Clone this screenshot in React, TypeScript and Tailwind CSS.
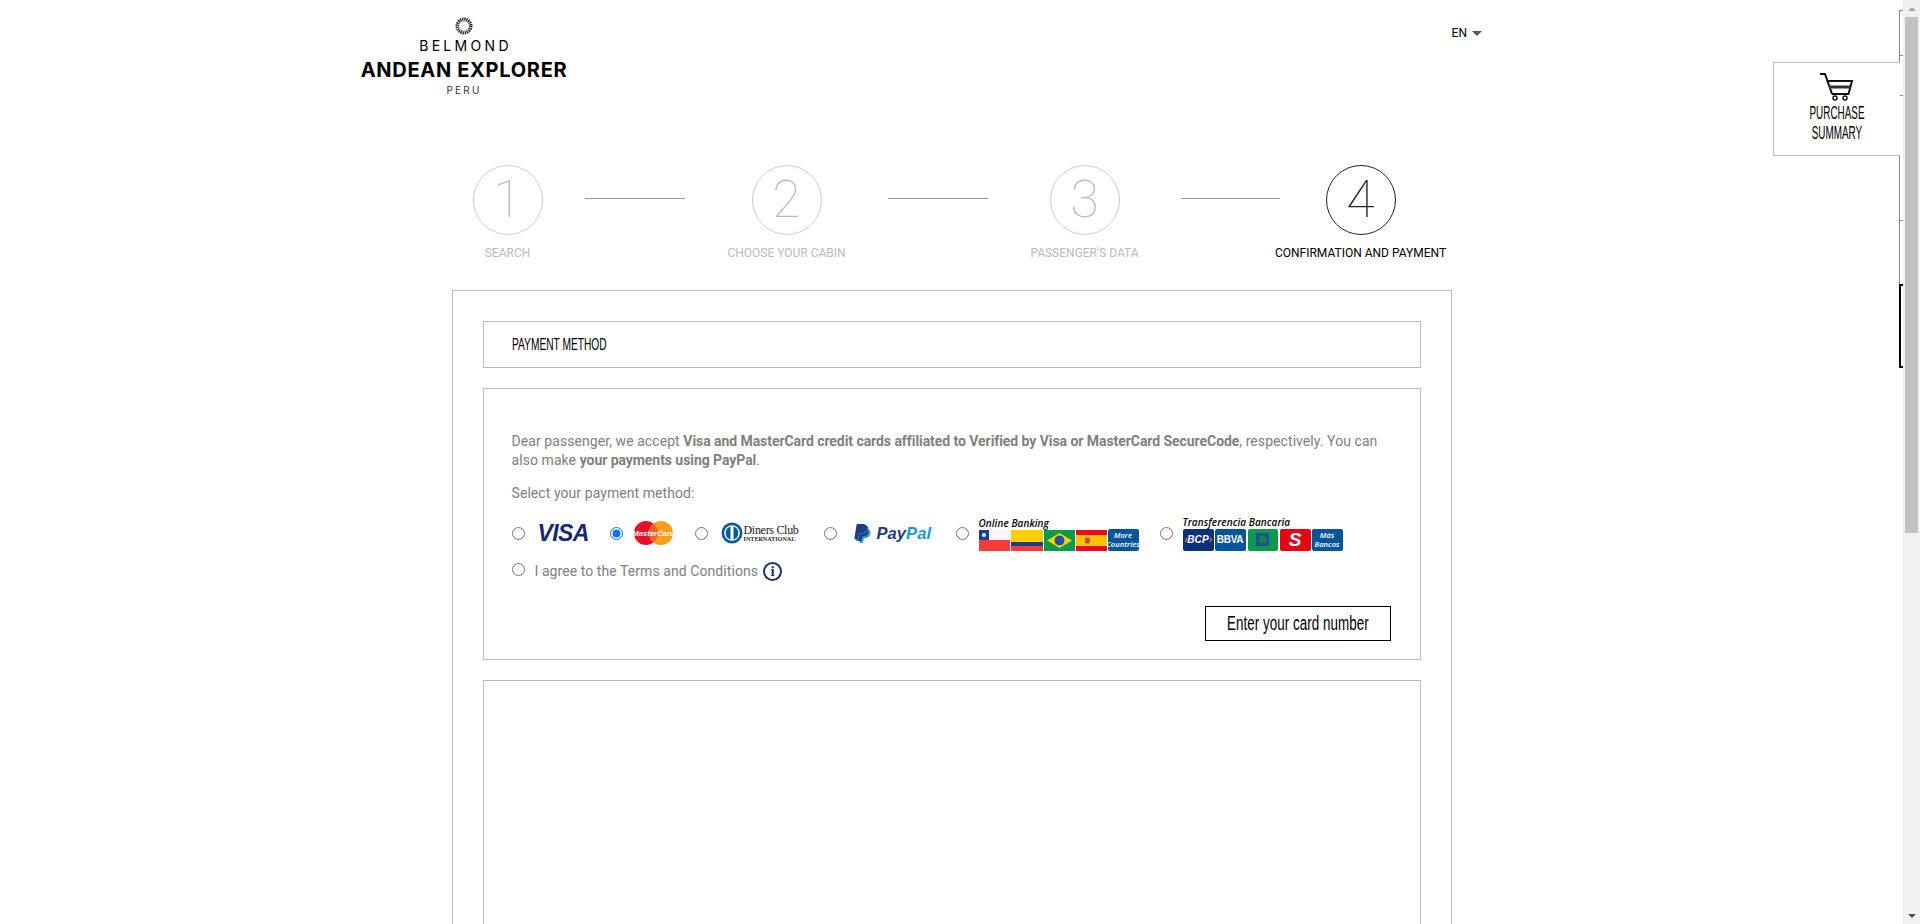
import { FaPaypal } from 'react-icons/fa';

const narrow = "inline-block shrink-0 whitespace-nowrap font-['Liberation_Sans',sans-serif]";

const steps = [
  { n: '1', label: 'SEARCH', width: 'w-[100px]', lineAfter: 'ml-[27px] mr-[17px] w-[100px]' },
  { n: '2', label: 'CHOOSE YOUR CABIN', width: 'w-[170px]', lineAfter: 'ml-[16px] mr-[32px] w-[100px]' },
  { n: '3', label: "PASSENGER'S DATA", width: 'w-[130px]', lineAfter: 'ml-[31px] mr-[-9px] w-[99px]' },
  { n: '4', label: 'CONFIRMATION AND PAYMENT', width: 'w-[180px]', active: true },
];

const Emblem = () => (
  <svg width="18" height="18" viewBox="0 0 18 18">
    <circle cx="9" cy="9" r="7" fill="none" stroke="#222" strokeWidth="3" strokeDasharray="1.4 0.8" />
    <circle cx="9" cy="9" r="5.2" fill="none" stroke="#555" strokeWidth="0.6" />
  </svg>
);

const Logo = () => (
  <div className="flex w-[208px] flex-col items-center text-black">
    <Emblem />
    <div className="mt-[3px] pl-[3px] font-['Inter',sans-serif] text-[14px] leading-[16px] tracking-[3.3px]">BELMOND</div>
    <div className="mt-[5px] whitespace-nowrap font-['Inter',sans-serif] text-[20px] leading-[22px] font-bold tracking-[0.7px]">ANDEAN EXPLORER</div>
    <div className="mt-[3px] font-['Inter',sans-serif] text-[10px] leading-[12px] tracking-[2.2px] text-[#333]">PERU</div>
  </div>
);

const Cart = () => (
  <svg width="34" height="28" viewBox="0 0 34 28" fill="none" stroke="#111" strokeWidth="2">
    <path d="M0 1h5l7 20" />
    <path d="M7 8h25l-3.500 13H12" />
    <path d="M9 14h21" strokeWidth="3" stroke="#333" />
    <circle cx="15" cy="25" r="2" strokeWidth="1.400" />
    <circle cx="25" cy="25" r="2" strokeWidth="1.400" />
  </svg>
);

const Visa = () => (
  <span className="block w-[51px] font-['Liberation_Sans',sans-serif] text-[23px] leading-[20px] font-bold tracking-[-0.6px] text-[#14296f] italic">VISA</span>
);

const MasterCard = () => (
  <svg width="39" height="24" viewBox="0 0 39 24">
    <circle cx="12" cy="12" r="12" fill="#e9102a" />
    <circle cx="27" cy="12" r="12" fill="#f79e1b" />
    <path d="M19.500 2.600a12 12 0 0 1 0 18.800a12 12 0 0 1 0-18.800z" fill="#f2622a" />
    <text x="19.500" y="14.500" textAnchor="middle" fontSize="7.500" fontStyle="italic" fontWeight="700" fill="#fff" fontFamily="Liberation Sans">MasterCard</text>
  </svg>
);

const Diners = () => (
  <div className="flex w-[78px] items-center">
    <svg width="24" height="22" viewBox="0 0 24 22" className="shrink-0">
      <circle cx="11" cy="11" r="10.500" fill="#0a5c9c" />
      <circle cx="11" cy="11" r="7.800" fill="#fff" />
      <path d="M9.500 4.500a6.800 6.800 0 0 0 0 13zM12.500 4.500a6.800 6.800 0 0 1 0 13z" fill="#0a5c9c" />
    </svg>
    <div className="-ml-[1px] font-['Liberation_Serif',serif] text-[#222]">
      <div className="text-[12px] leading-[12px] tracking-[-0.3px] whitespace-nowrap">Diners Club</div>
      <div className="text-[6px] leading-[7px] font-bold whitespace-nowrap">INTERNATIONAL</div>
    </div>
  </div>
);

const PayPal = () => (
  <div className="flex w-[77px] items-center font-['Liberation_Sans',sans-serif] text-[16.500px] font-bold italic">
    <span className="relative mr-[7px] h-[20px] w-[16px] shrink-0">
      <FaPaypal className="absolute top-[1px] left-[1px] h-[20px] w-[16px] text-[#179bd7]" />
      <FaPaypal className="absolute top-0 left-0 h-[19px] w-[15px] text-[#253b80]" />
    </span>
    <span className="text-[#253b80]">Pay</span>
    <span className="text-[#179bd7]">Pal</span>
  </div>
);

const Chile = () => (
  <svg width="31" height="21" viewBox="0 0 31 21">
    <rect width="31" height="21" fill="#f8f8f8" />
    <rect y="10" width="31" height="11" fill="#f53b3b" />
    <rect width="10" height="10" fill="#1a3f94" />
    <circle cx="5" cy="5" r="2" fill="#fff" />
  </svg>
);

const Colombia = () => (
  <svg width="32" height="21" viewBox="0 0 32 21">
    <rect width="32" height="12" fill="#fccf00" />
    <rect y="12" width="32" height="4" fill="#1a3f84" />
    <rect y="16" width="32" height="5" fill="#f53b3b" />
  </svg>
);

const Brazil = () => (
  <svg width="31" height="21" viewBox="0 0 31 21">
    <rect width="31" height="21" fill="#0a9a4a" />
    <path d="M15.500 3L28 10.500 15.500 18 3 10.500z" fill="#fbd404" />
    <circle cx="15.500" cy="10.500" r="5" fill="#2452a4" />
  </svg>
);

const Spain = () => (
  <svg width="31" height="21" viewBox="0 0 31 21">
    <rect width="31" height="21" fill="#ea0a1c" />
    <rect y="5" width="31" height="11" fill="#fdc500" />
    <rect x="9" y="7.500" width="5" height="6" rx="1.500" fill="#c8502a" />
  </svg>
);

const blueTile = "flex h-[22px] w-[31px] flex-col items-center justify-center rounded-[2px] bg-[#06559b] text-center font-['Open_Sans',sans-serif] text-[7.500px] leading-[9px] font-semibold text-white italic";

const OnlineBanking = () => (
  <div className="flex flex-col">
    <span className="whitespace-nowrap font-['Open_Sans',sans-serif] text-[10px] leading-[14px] font-semibold text-black italic">Online Banking</span>
    <div className="flex gap-[1px]">
      <Chile />
      <Colombia />
      <Brazil />
      <Spain />
      <div className={`${blueTile} -mt-[1px]`}>
        <span>More</span>
        <span className="-mx-[2px] whitespace-nowrap">Countries</span>
      </div>
    </div>
  </div>
);

const BankTransfer = () => (
  <div className="flex flex-col">
    <span className="whitespace-nowrap font-['Open_Sans',sans-serif] text-[10px] leading-[13px] font-semibold text-black italic">Transferencia Bancaria</span>
    <div className="flex gap-[1px]">
      <div className="flex h-[22px] w-[31px] items-center justify-center rounded-[2px] bg-[#0b2f7a] font-['Liberation_Sans',sans-serif] text-[10px] font-bold text-white italic">
        <span className="text-[#f26a21]">›</span>BCP<span className="text-[#f26a21]">›</span>
      </div>
      <div className="flex h-[22px] w-[31px] items-center justify-center rounded-[2px] bg-[#06559b] font-['Liberation_Sans',sans-serif] text-[10px] font-bold tracking-[-0.3px] text-white">BBVA</div>
      <div className="ml-[1px] flex h-[22px] w-[30px] items-center justify-center rounded-[2px] bg-[#0a9a4a]">
        <div className="h-[13px] w-[13px] border-[3px] border-[#1f4e9c] bg-[#0a8a4a]" />
      </div>
      <div className="ml-[1px] flex h-[22px] w-[31px] items-center justify-center rounded-[2px] bg-[#e30613] font-['Liberation_Sans',sans-serif] text-[19px] font-bold text-white italic">S</div>
      <div className={blueTile}>
        <span>Más</span>
        <span>Bancos</span>
      </div>
    </div>
  </div>
);

const payments = [
  { id: 'visa', gap: '', logoGap: 'ml-[13px]', logo: <Visa /> },
  { id: 'mastercard', gap: 'ml-[21px]', logoGap: 'ml-[11px]', logo: <MasterCard />, checked: true },
  { id: 'diners', gap: 'ml-[22px]', logoGap: 'ml-[13px]', logo: <Diners /> },
  { id: 'paypal', gap: 'ml-[25px]', logoGap: 'ml-[17px]', logo: <PayPal /> },
  { id: 'online', gap: 'ml-[25px]', logoGap: 'ml-[10px]', logo: <OnlineBanking /> },
  { id: 'transfer', gap: 'ml-[21px]', logoGap: 'ml-[10px]', logo: <BankTransfer /> },
];

const App = () => {
  return (
    <div className="relative flex h-[924px] overflow-hidden bg-white font-['Roboto',sans-serif]">
      <main className="min-w-0 flex-1">
        {/* Header */}
        <header className="flex h-[165px] items-start justify-between pt-[17px] pr-[421px] pl-[360px]">
          <Logo />
          <div className="mt-[8px] flex items-center gap-[5px] text-[12px] leading-[16px] text-black">
            EN
            <span className="h-0 w-0 border-x-[5px] border-t-[5px] border-x-transparent border-t-[#555]" />
          </div>
        </header>

        <div className="mx-auto w-[1000px]">
          {/* Steps */}
          <div className="flex h-[125px] items-start pl-[6px]">
            {steps.map((step) => (
              <div key={step.n} className="contents">
                <div className={`flex shrink-0 flex-col items-center ${step.width}`}>
                  <div className={`flex h-[70px] w-[70px] items-center justify-center rounded-full border text-[52px] leading-none font-thin ${step.active ? 'border-[#222] text-[#222]' : 'border-[#ccc] text-[#bbb]'}`}>
                    {step.n}
                  </div>
                  <span className={`mt-[10px] whitespace-nowrap text-[12px] leading-[16px] ${step.active ? 'text-black' : 'text-[#bbb]'}`}>{step.label}</span>
                </div>
                {step.lineAfter && <div className={`mt-[33px] h-px shrink-0 bg-[#999] ${step.lineAfter}`} />}
              </div>
            ))}
          </div>

          {/* Payment panel */}
          <section className="border border-[#bbb] px-[30px] pt-[30px] pb-[40px]">
            <div className="flex h-[47px] items-center border border-[#bbb] pl-[28px] text-black">
              <span className={`${narrow} origin-left scale-x-[.6] text-[17px]`}>PAYMENT METHOD</span>
            </div>

            <div className="mt-[20px] border border-[#bbb] px-[28px] pt-[43px] pb-[18px] text-[14px] leading-[19px] tracking-[0.07px] text-[#808080]">
              <p>
                Dear passenger, we accept <strong className="font-bold tracking-[-0.06px]">Visa and MasterCard credit cards affiliated to Verified by Visa or MasterCard SecureCode</strong>, respectively. You can also make <strong className="font-bold tracking-[-0.06px]">your payments using PayPal</strong>.
              </p>
              <p className="mt-[14px]">Select your payment method:</p>

              <div className="mt-[13px] flex h-[34px] items-center">
                {payments.map((p) => (
                  <label key={p.id} className={`flex items-center ${p.gap}`}>
                    <input type="radio" name="payment" defaultChecked={p.checked} className="h-[13px] w-[13px] shrink-0" />
                    <span className={p.logoGap}>{p.logo}</span>
                  </label>
                ))}
              </div>

              <label className="mt-[12px] flex items-center">
                <input type="radio" name="terms" className="mb-[5px] h-[13px] w-[13px] shrink-0" />
                <span className="ml-[10px]">I agree to the Terms and Conditions</span>
                <span className="ml-[5px] flex h-[19px] w-[19px] items-center justify-center rounded-full border-2 border-[#1f2f78] font-['Liberation_Serif',serif] text-[15px] font-bold text-[#1f2f78]">i</span>
              </label>

              <div className="mt-[25px] flex justify-end">
                <button className="mr-[1px] flex h-[35px] w-[186px] items-center justify-center border border-black text-black">
                  <span className={`${narrow} scale-x-[.67] text-[20px]`}>Enter your card number</span>
                </button>
              </div>
            </div>

            <div className="mt-[20px] h-[400px] border border-[#bbb]" />
          </section>
        </div>
      </main>

      {/* Browser scrollbar */}
      <div className="flex w-[17px] shrink-0 flex-col items-center bg-[#f1f1f1]">
        <div className="flex h-[17px] items-center justify-center">
          <span className="h-0 w-0 border-x-[4px] border-b-[4px] border-x-transparent border-b-[#a3a3a3]" />
        </div>
        <div className="h-[516px] w-[13px] bg-[#c1c1c1]" />
        <div className="flex-1" />
        <div className="flex h-[17px] items-center justify-center">
          <span className="h-0 w-0 border-x-[4px] border-t-[4px] border-x-transparent border-t-[#505050]" />
        </div>
      </div>

      {/* Off-canvas summary drawer, only its edge shows */}
      <div className="absolute top-[10px] left-[1899px] flex w-[4px] flex-col">
        <div className="h-[45px] border-t border-l border-[#888]" />
        <div className="h-[40px] border-t border-l border-[#888]" />
        <div className="h-[125px] border-t border-l border-[#888]" />
        <div className="h-[64px] border-t border-l border-[#888]" />
        <div className="h-[84px] border-y-2 border-l-2 border-black" />
      </div>

      {/* Purchase summary tab */}
      <div className="absolute top-[62px] left-[1773px] flex h-[94px] w-[127px] flex-col items-center border border-r-0 border-[#bbb] bg-white pt-[10px] text-[18px] leading-[20px] text-black">
        <Cart />
        <span className={`${narrow} mt-[2px] scale-x-[.55]`}>PURCHASE</span>
        <span className={`${narrow} scale-x-[.55]`}>SUMMARY</span>
      </div>
    </div>
  );
};

export default App;
